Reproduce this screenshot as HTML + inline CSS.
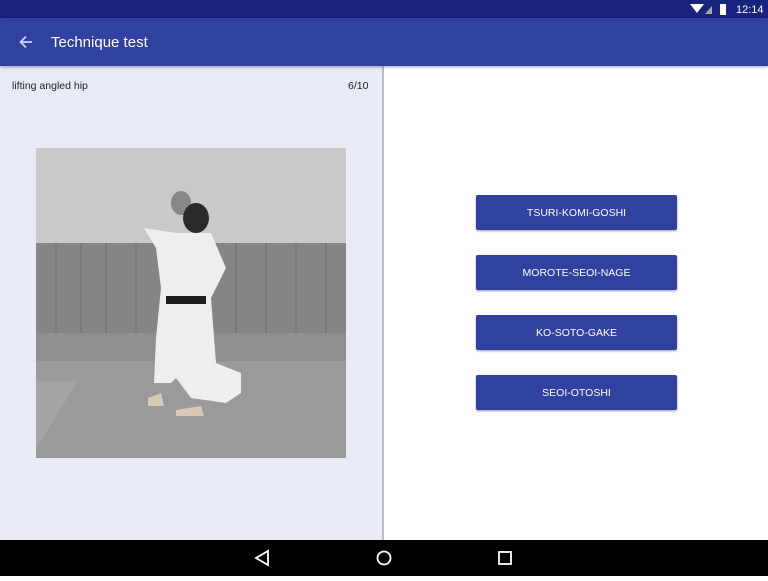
<!DOCTYPE html>
<html><head><style>
*{margin:0;padding:0;box-sizing:border-box}
body{width:768px;height:576px;overflow:hidden;font-family:"Liberation Sans",sans-serif;background:#fff;position:relative}
.status{position:absolute;left:0;top:0;width:768px;height:18px;background:#1a237e;color:#fff;font-size:11px}
.appbar{position:absolute;left:0;top:18px;width:768px;height:48px;background:#3141a0;color:#fff;box-shadow:0 1px 3px rgba(0,0,0,.35);z-index:2}
.left{position:absolute;left:0;top:66px;width:384px;height:474px;background:#e8eaf6;border-right:2px solid #bcbcc4}
.btn{position:absolute;left:476px;width:201px;height:35px;background:#3141a0;color:#fff;font-size:10.5px;text-align:center;line-height:37px;border-radius:2px;box-shadow:0 1px 2px rgba(0,0,0,.4)}
.nav{position:absolute;left:0;top:540px;width:768px;height:36px;background:#000}
</style></head><body>
<div class="status">
<svg style="position:absolute;left:690px;top:3px" width="40" height="12"><polygon points="0,1 14,1 7,10" fill="#fff"/><polygon points="15,11 22,3 22,11" fill="#aaa"/><rect x="30" y="1" width="6" height="11" fill="#fff"/></svg>
<span style="position:absolute;left:736px;top:4px">12:14</span></div>
<div class="appbar">
<svg style="position:absolute;left:19px;top:17px" width="14" height="14"><path d="M13 7H2M7 1.5L1.5 7 7 12.5" stroke="#d0d4ee" stroke-width="1.7" fill="none"/></svg>
<span style="position:absolute;left:51px;top:16px;font-size:15px">Technique test</span></div>
<div class="left">
<span style="position:absolute;left:12px;top:14px;font-size:10.5px;color:#222">lifting angled hip</span>
<span style="position:absolute;left:348px;top:14px;font-size:10.5px;color:#222">6/10</span>
<svg style="position:absolute;left:36px;top:82px" width="310" height="310">
<rect width="310" height="95" fill="#c9c9c9"/>
<rect y="95" width="310" height="90" fill="#858585"/>
<g stroke="#6e6e6e" stroke-width="1">
<line x1="20" y1="95" x2="20" y2="185"/><line x1="45" y1="95" x2="45" y2="185"/><line x1="70" y1="95" x2="70" y2="185"/><line x1="100" y1="95" x2="100" y2="185"/><line x1="130" y1="95" x2="130" y2="185"/><line x1="200" y1="95" x2="200" y2="185"/><line x1="230" y1="95" x2="230" y2="185"/><line x1="260" y1="95" x2="260" y2="185"/><line x1="290" y1="95" x2="290" y2="185"/></g>
<rect y="185" width="310" height="28" fill="#8f8f8f"/>
<rect y="213" width="310" height="97" fill="#9a9a9a"/>
<polygon points="0,233 42,233 0,300" fill="#a4a4a4"/>
<ellipse cx="145" cy="55" rx="10" ry="12" fill="#888"/>
<ellipse cx="160" cy="70" rx="13" ry="15" fill="#2a2a2a"/>
<path d="M108 80 L140 85 L175 85 L190 120 L180 140 L175 150 L180 215 L205 225 L205 245 L190 255 L155 250 L140 230 L135 235 L118 235 L120 190 L125 140 L120 100 Z" fill="#eeeeee"/>
<rect x="130" y="148" width="40" height="8" fill="#1e1e1e"/>
<path d="M112 250 L125 245 L128 258 L112 258Z M140 262 L165 258 L168 268 L140 268Z" fill="#d8c8b8"/>
</svg>
</div>
<div class="btn" style="top:195px">TSURI-KOMI-GOSHI</div>
<div class="btn" style="top:255px">MOROTE-SEOI-NAGE</div>
<div class="btn" style="top:315px">KO-SOTO-GAKE</div>
<div class="btn" style="top:375px">SEOI-OTOSHI</div>
<div class="nav">
<svg width="768" height="36"><path d="M268 11 L268 25 L256 18 Z" stroke="#fff" stroke-width="1.8" fill="none"/><circle cx="384" cy="18" r="6.5" stroke="#fff" stroke-width="1.8" fill="none"/><rect x="499" y="12" width="12" height="12" stroke="#fff" stroke-width="1.8" fill="none"/></svg>
</div>
</body></html>
